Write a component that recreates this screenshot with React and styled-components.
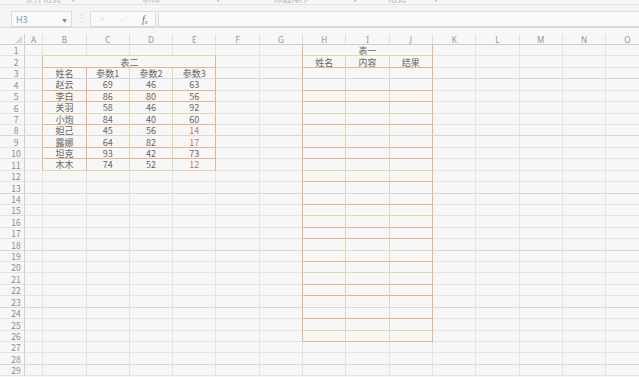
import React from "react";
import styled, { createGlobalStyle } from "styled-components";
import { X, Check } from "lucide-react";

const COLS = ["A", "B", "C", "D", "E", "F", "G", "H", "I", "J", "K", "L", "M", "N", "O"];
const ROWS = 29;

const GRID = "#e4e4e4";
const GRID_DARK = "#d8d8d8";
const ORANGE = "#e8b48d";
const GREEN = "#d9dbb0";
const LINE = { Y: "#e0d8a6", O: ORANGE, G: "#d9d9d9" };
// bottom line colour of rows 1..26 inside the tables
const BAND = "YOGOOYOGOOYOGOYOOGOYOOGOYO";

const TABLES = [
  { c0: 1, c1: 4, r0: 2, r1: 11, vert: { 0: ORANGE, 1: ORANGE, 2: GREEN, 3: GREEN, 4: ORANGE } },
  { c0: 7, c1: 9, r0: 1, r1: 26, vert: { 6: ORANGE, 7: GREEN, 8: GREEN, 9: ORANGE } },
];

const MERGED = {
  "1,2": { span: 4, text: "表二" },
  "7,1": { span: 3, text: "表一" },
};

const scores = [
  ["赵云", 69, 46, 63],
  ["李白", 86, 80, 56],
  ["关羽", 58, 46, 92],
  ["小炮", 84, 40, 60],
  ["妲己", 45, 56, 14],
  ["露娜", 64, 82, 17],
  ["坦克", 93, 42, 73],
  ["木木", 74, 52, 12],
];

const values = {};
["姓名", "参数1", "参数2", "参数3"].forEach((t, i) => (values[`${i + 1},3`] = t));
scores.forEach((row, ri) => row.forEach((v, ci) => (values[`${ci + 1},${ri + 4}`] = v)));
["姓名", "内容", "结果"].forEach((t, i) => (values[`${i + 7},2`] = t));

const inTable = (c, r) => TABLES.find((t) => c >= t.c0 && c <= t.c1 && r >= t.r0 && r <= t.r1);

function borders(c, r, span) {
  const last = c + span - 1;
  let bottom = r % 5 === 3 ? GRID_DARK : GRID;
  if (inTable(c, r) || inTable(c, r + 1)) bottom = LINE[BAND[r - 1]];
  let right = GRID;
  const t = TABLES.find((t) => r >= t.r0 && r <= t.r1 && t.vert[last]);
  if (t) right = t.vert[last];
  return { right, bottom };
}

const GlobalStyle = createGlobalStyle`
  html, body { margin: 0; padding: 0; background: #f7f7f7; }
  body { font-family: "Noto Sans CJK SC", "Noto Sans", sans-serif; }
  * { box-sizing: border-box; }
`;

const Page = styled.div`
  width: 639px;
  height: 377px;
  overflow: hidden;
  background: #f7f7f7;
  display: flex;
  flex-direction: column;
`;

const Ribbon = styled.div`
  height: 5px;
  flex: none;
  border-bottom: 1px solid #e4e4e4;
  overflow: hidden;
  display: flex;
  align-items: flex-start;
  font-size: 9px;
  color: #b4b4b4;
  white-space: nowrap;
`;

const Frag = styled.span`
  margin-left: ${(p) => p.$gap}px;
  line-height: 9px;
  margin-top: -6.5px;
`;

const FormulaBar = styled.div`
  height: 23px;
  flex: none;
  border-bottom: 1px solid #d9d9d9;
  background: #f4f4f4;
  display: flex;
  align-items: flex-start;
  padding: 6px 0 0 11px;
`;

const NameBox = styled.div`
  width: 61px;
  height: 16px;
  border: 1px solid #dcdcdc;
  background: #fafafa;
  display: flex;
  align-items: center;
  justify-content: space-between;
  padding: 0 4px 0 4px;
  font-size: 9px;
  color: #7f9cb8;
`;

const Caret = styled.span`
  font-size: 5px;
  color: #8c8c8c;
`;

const Dots = styled.div`
  width: 18px;
  line-height: 16px;
  text-align: center;
  font-size: 9px;
  color: #c6c6c6;
`;

const FxBox = styled.div`
  width: 66px;
  height: 16px;
  border: 1px solid #dcdcdc;
  background: #fafafa;
  display: grid;
  grid-template-columns: repeat(3, 21.5px);
  justify-items: center;
  align-items: center;
  color: #cfcfcf;
`;

const Fx = styled.span`
  font-family: "Liberation Serif", serif;
  font-style: italic;
  font-size: 10px;
  color: #6a6a6a;
  sub {
    font-size: 6px;
    vertical-align: -1px;
  }
`;

const Input = styled.div`
  flex: 1;
  height: 16px;
  margin-left: 2px;
  border: 1px solid #dcdcdc;
  border-right: none;
  background: #fafafa;
`;

const Sheet = styled.div`
  margin-top: 5.6px;
  display: grid;
  grid-template-columns: 25px 18.3px repeat(14, 43.3px);
  grid-template-rows: repeat(${ROWS + 1}, 11.43px);
`;

const Corner = styled.div`
  border-right: 1px solid #cfcfcf;
  border-bottom: 1px solid #cfcfcf;
  display: flex;
  justify-content: flex-end;
  align-items: flex-end;
  padding: 0 2px 1px 0;
`;

const ColHead = styled.div`
  border-right: 1px solid #e0e0e0;
  border-bottom: 1px solid #cdcdcd;
  display: flex;
  align-items: center;
  justify-content: center;
  font-family: "Noto Sans", sans-serif;
  font-size: 8px;
  color: #8a96a6;
  padding-top: 1px;
`;

const RowHead = styled.div`
  border-right: 1px solid #cfcfcf;
  border-bottom: 1px solid ${(p) => p.$line};
  display: flex;
  align-items: center;
  justify-content: center;
  padding: 1px 0 0 8px;
  font-size: 8.5px;
  line-height: 1;
  color: #8a8a8a;
`;

const Cell = styled.div`
  grid-column: span ${(p) => p.$span};
  border-right: 1px solid ${(p) => p.$right};
  border-bottom: 1px solid ${(p) => p.$bottom};
  display: flex;
  align-items: center;
  justify-content: center;
  padding-top: 1px;
  font-size: 9px;
  line-height: 1;
  white-space: nowrap;
  color: ${(p) => (p.$alert ? "#c9756c" : "#666666")};
`;

function CornerMark() {
  return (
    <svg width="7" height="7" viewBox="0 0 7 7">
      <path d="M7 0 L7 7 L0 7 Z" fill="#d8d8d8" />
    </svg>
  );
}

function SheetGrid() {
  const cells = [
    <Corner key="corner">
      <CornerMark />
    </Corner>,
    ...COLS.map((c) => <ColHead key={c}>{c}</ColHead>),
  ];
  for (let r = 1; r <= ROWS; r++) {
    cells.push(
      <RowHead key={`h${r}`} $line={r % 5 === 3 ? GRID_DARK : GRID}>
        {r}
      </RowHead>
    );
    let c = 0;
    while (c < COLS.length) {
      const merged = MERGED[`${c},${r}`];
      const span = merged ? merged.span : 1;
      const { right, bottom } = borders(c, r, span);
      const v = merged ? merged.text : values[`${c},${r}`];
      cells.push(
        <Cell
          key={`${c},${r}`}
          $span={span}
          $right={right}
          $bottom={bottom}
          $alert={c === 4 && typeof v === "number" && v < 20}
        >
          {v}
        </Cell>
      );
      c += span;
    }
  }
  return <Sheet>{cells}</Sheet>;
}

export default function App() {
  return (
    <Page>
      <GlobalStyle />
      <Ribbon>
        <Frag $gap={25}>条件格式</Frag>
        <Frag $gap={10}>▾</Frag>
        <Frag $gap={66}>求和</Frag>
        <Frag $gap={56}>▾</Frag>
        <Frag $gap={52}>筛选排序</Frag>
        <Frag $gap={44}>▾</Frag>
        <Frag $gap={30}>格式</Frag>
        <Frag $gap={28}>▾</Frag>
      </Ribbon>
      <FormulaBar>
        <NameBox>
          H3
          <Caret>▼</Caret>
        </NameBox>
        <Dots>⋮</Dots>
        <FxBox>
          <X size={8} strokeWidth={1.5} />
          <Check size={9} strokeWidth={1.5} />
          <Fx>
            f<sub>x</sub>
          </Fx>
        </FxBox>
        <Input />
      </FormulaBar>
      <SheetGrid />
    </Page>
  );
}
